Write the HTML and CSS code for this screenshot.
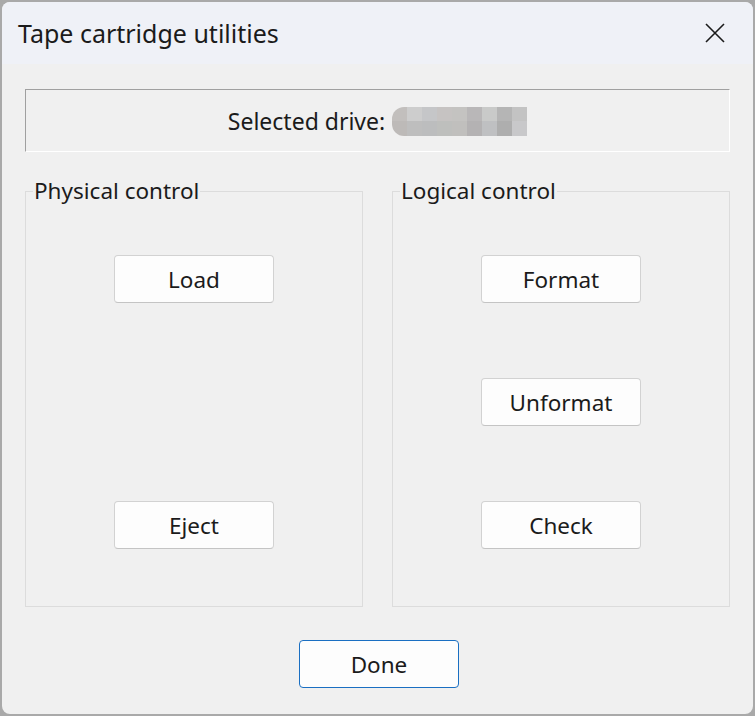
FILE: index.html
```html
<!DOCTYPE html>
<html lang="en">
<head>
<meta charset="UTF-8">
<meta name="viewport" content="width=device-width, initial-scale=1.0">
<title>Tape cartridge utilities</title>
<link rel="stylesheet" href="styles.css">
</head>
<body>

<div class="window">
    <!-- Barra de título -->
    <div class="titlebar">
        <span class="title">Tape cartridge utilities</span>
        <button class="close" aria-label="Close">
            <svg width="20" height="20" viewBox="0 0 20 20">
                <path d="M1 1 L19 19 M19 1 L1 19" stroke="#1b1b1b" stroke-width="1.6" fill="none"/>
            </svg>
        </button>
    </div>

    <div class="content">
        <!-- Unidad seleccionada -->
        <div class="drive">
            <span>Selected drive:</span>
            <span class="blur">
                <span class="px" style="background:#c2bfbd"></span>
                <span class="px" style="background:#cdcdcd"></span>
                <span class="px" style="background:#c5c6c8"></span>
                <span class="px" style="background:#c6c3c2"></span>
                <span class="px" style="background:#c4c3c1"></span>
                <span class="px" style="background:#b9b7b8"></span>
                <span class="px" style="background:#c9cac9"></span>
                <span class="px" style="background:#b5b5b5"></span>
                <span class="px" style="background:#c3c3c3"></span>
                <span class="px" style="background:#bdbab8"></span>
                <span class="px" style="background:#bebebe"></span>
                <span class="px" style="background:#bcbdbe"></span>
                <span class="px" style="background:#bebfbd"></span>
                <span class="px" style="background:#c0bfbd"></span>
                <span class="px" style="background:#b4b2b3"></span>
                <span class="px" style="background:#bfc0c2"></span>
                <span class="px" style="background:#aeaeae"></span>
                <span class="px" style="background:#c8c8ca"></span>
            </span>
        </div>

        <div class="grupos">
            <fieldset class="grupo">
                <legend>Physical control</legend>
                <div class="botones">
                    <button class="boton">Load</button>
                    <button class="boton fila3">Eject</button>
                </div>
            </fieldset>
            <fieldset class="grupo">
                <legend>Logical control</legend>
                <div class="botones">
                    <button class="boton">Format</button>
                    <button class="boton">Unformat</button>
                    <button class="boton">Check</button>
                </div>
            </fieldset>
        </div>

        <div class="pie">
            <button class="boton done">Done</button>
        </div>
    </div>
</div>

</body>
</html>
```

FILE: styles.css
```css
body {
    margin: 0;
    padding: 2px;
    height: 712px;
    background: #a9a9a9;
    font-family: "Noto Sans", "Segoe UI", sans-serif;
    color: #1b1b1b;
}

.window {
    height: 712px;
    background: #f0f0f0;
    border-radius: 8px;
    overflow: hidden;
    display: flex;
    flex-direction: column;
}

.titlebar {
    height: 62px;
    flex-shrink: 0;
    background: #eff1f7;
    display: flex;
    align-items: center;
    justify-content: space-between;
    padding-left: 16px;
    padding-right: 28px;
}

.title {
    font-size: 25px;
}

.close {
    border: none;
    background: none;
    padding: 0;
    width: 20px;
    height: 20px;
    display: flex;
}

.content {
    padding: 25px 23px 0 23px;
}

.drive {
    height: 61px;
    border: 1px solid;
    border-color: #a0a0a0 #ffffff #ffffff #a0a0a0;
    display: flex;
    align-items: center;
    justify-content: center;
    gap: 7px;
    font-size: 23px;
}

/* Nombre de la unidad pixelado */
.blur {
    display: grid;
    grid-template-columns: repeat(9, 15px);
    grid-template-rows: 14px 15px;
    border-radius: 12px 0 0 12px;
    overflow: hidden;
    margin-top: 2px;
}

.grupos {
    display: flex;
    gap: 29px;
    margin-top: 24px;
}

.grupo {
    flex: 1;
    min-width: 0;
    margin: 0;
    padding: 49px 0 57px 0;
    border: 1px solid #dcdcdc;
}

.grupo legend {
    font-size: 22.5px;
    line-height: 30px;
    padding: 0 1px;
    margin-left: 7px;
}

.botones {
    display: grid;
    grid-template-rows: repeat(3, 48px);
    row-gap: 75px;
    justify-content: center;
}

.boton {
    width: 160px;
    height: 48px;
    background: #fdfdfd;
    border: 1px solid #d2d2d2;
    border-bottom-color: #c4c4c4;
    border-radius: 4px;
    font-family: inherit;
    font-size: 22.5px;
    color: #1b1b1b;
    padding: 0;
}

.fila3 {
    grid-row: 3;
}

.pie {
    display: flex;
    justify-content: center;
    padding-left: 3px;
    margin-top: 33px;
}

.done {
    border: 1px solid #1a6fc2;
}
```
